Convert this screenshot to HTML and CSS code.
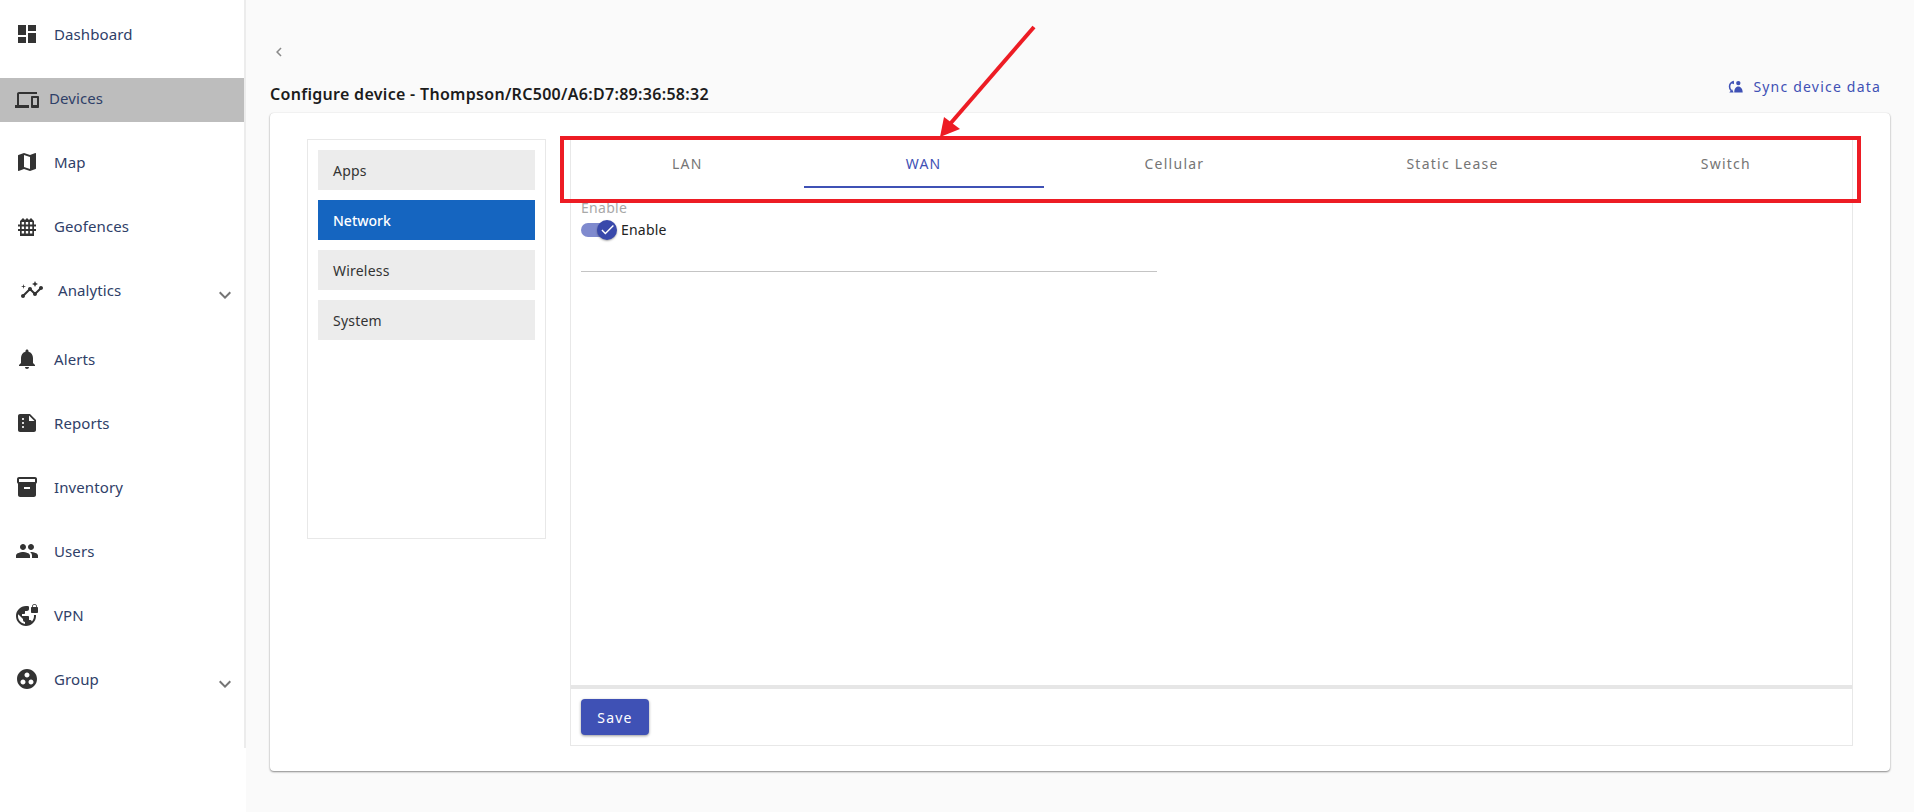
FILE: index.html
```html
<!DOCTYPE html>
<html>
<head>
    <title>Configure device</title>
    <link rel="stylesheet" href="styles.css">
</head>
<body>
    <aside class="sidebar">
        <nav class="nav">
            <a class="nav-item">
                <svg class="icon" viewBox="0 0 24 24"><path d="M3 13h8V3H3v10zm0 8h8v-6H3v6zm10 0h8V11h-8v10zm0-18v6h8V3h-8z"/></svg>
                <span>Dashboard</span>
            </a>
            <a class="nav-item active">
                <svg class="icon" viewBox="0 0 24 24"><path d="M4 6h18V4H4c-1.1 0-2 .9-2 2v11H0v3h14v-3H4V6zm19 2h-6c-.55 0-1 .45-1 1v10c0 .55.45 1 1 1h6c.55 0 1-.45 1-1V9c0-.55-.45-1-1-1zm-1 9h-4v-7h4v7z"/></svg>
                <span>Devices</span>
            </a>
            <a class="nav-item">
                <svg class="icon" viewBox="0 0 24 24"><path d="M20.5 3l-.16.03L15 5.1 9 3 3.36 4.9c-.21.07-.36.25-.36.48V20.5c0 .28.22.5.5.5l.16-.03L9 18.9l6 2.1 5.64-1.9c.21-.07.36-.25.36-.48V3.5c0-.28-.22-.5-.5-.5zM15 19l-6-2.11V5l6 2.11V19z"/></svg>
                <span>Map</span>
            </a>
            <a class="nav-item">
                <svg class="icon" viewBox="0 0 24 24"><path fill-rule="evenodd" d="M5 22V7l3-3 2 2 2-2 2 2 2-2 3 3v15zM6.7 8h2.4v2.5H6.700zM10.800 8h2.400v2.500h-2.400zM14.900 8h2.400v2.500h-2.400zM6.700 12.500h2.400V15H6.700zM10.800 12.500h2.400V15h-2.400zM14.900 12.500h2.400V15h-2.400zM6.700 17h2.400v2.500H6.700zM10.800 17h2.400v2.500h-2.400zM14.900 17h2.400v2.500h-2.400z"/><path d="M3 10.500h2v2H3zM19 10.500h2v2h-2zM3 15h2v2H3zM19 15h2v2h-2z"/></svg>
                <span>Geofences</span>
            </a>
            <a class="nav-item analytics">
                <svg class="icon" viewBox="0 0 24 24"><path d="M21 8c-1.450 0-2.260 1.440-1.930 2.510l-3.550 3.560c-.3-.09-.74-.09-1.040 0l-2.550-2.550C12.270 10.450 11.460 9 10 9c-1.450 0-2.270 1.440-1.930 2.520l-4.560 4.550C2.440 15.740 1 16.550 1 18c0 1.100.9 2 2 2 1.450 0 2.260-1.440 1.930-2.510l4.550-4.560c.3.090.74.090 1.040 0l2.550 2.550C12.730 16.550 13.540 18 15 18c1.450 0 2.270-1.440 1.930-2.520l3.560-3.550c1.070.33 2.510-.48 2.510-1.930 0-1.100-.9-2-2-2z"/><path d="M15 9l.94-2.070L18 6l-2.060-.93L15 3l-.92 2.070L12 6l2.080.93zM3.500 11L4 9l2-.5L4 8l-.5-2L3 8l-2 .5L3 9z"/></svg>
                <span>Analytics</span>
                <svg class="chevron" viewBox="0 0 24 24"><path d="M16.590 8.590L12 13.170 7.410 8.590 6 10l6 6 6-6z"/></svg>
            </a>
            <a class="nav-item">
                <svg class="icon" viewBox="0 0 24 24"><path d="M12 22c1.100 0 2-.9 2-2h-4c0 1.100.89 2 2 2zm6-6v-5c0-3.070-1.640-5.640-4.500-6.320V4c0-.83-.67-1.500-1.500-1.500s-1.500.67-1.500 1.500v.68C7.630 5.360 6 7.920 6 11v5l-2 2v1h16v-1l-2-2z"/></svg>
                <span>Alerts</span>
            </a>
            <a class="nav-item">
                <svg class="icon" viewBox="0 0 24 24"><path d="M15 3H5c-1.100 0-1.990.9-1.990 2L3 19c0 1.100.89 2 1.990 2H19c1.100 0 2-.9 2-2V9l-6-6zM8 17c-.55 0-1-.45-1-1s.45-1 1-1 1 .45 1 1-.45 1-1 1zm0-4c-.55 0-1-.45-1-1s.45-1 1-1 1 .45 1 1-.45 1-1 1zm0-4c-.55 0-1-.45-1-1s.45-1 1-1 1 .45 1 1-.45 1-1 1zm6 1V4.500l5.500 5.500H14z"/></svg>
                <span>Reports</span>
            </a>
            <a class="nav-item">
                <svg class="icon" viewBox="0 0 24 24"><path d="M20 2H4c-1 0-2 .9-2 2v3.010c0 .72.43 1.340 1 1.690V20c0 1.100 1.100 2 2 2h14c.9 0 2-.9 2-2V8.700c.57-.35 1-.97 1-1.690V4c0-1.100-1-2-2-2zm-5 12H9v-2h6v2zm5-7H4V4l16-.02V7z"/></svg>
                <span>Inventory</span>
            </a>
            <a class="nav-item">
                <svg class="icon" viewBox="0 0 24 24"><path d="M16 11c1.660 0 2.990-1.340 2.990-3S17.660 5 16 5c-1.660 0-3 1.340-3 3s1.340 3 3 3zm-8 0c1.660 0 2.990-1.340 2.990-3S9.660 5 8 5C6.340 5 5 6.340 5 8s1.340 3 3 3zm0 2c-2.330 0-7 1.170-7 3.500V19h14v-2.500c0-2.330-4.670-3.500-7-3.500zm8 0c-.29 0-.62.02-.97.05 1.160.84 1.970 1.970 1.970 3.450V19h6v-2.500c0-2.330-4.670-3.500-7-3.500z"/></svg>
                <span>Users</span>
            </a>
            <a class="nav-item">
                <svg class="icon" viewBox="0 0 24 24"><path d="M22 4v-.5C22 2.120 20.880 1 19.500 1S17 2.120 17 3.500V4c-.55 0-1 .45-1 1v4c0 .55.45 1 1 1h5c.55 0 1-.45 1-1V5c0-.55-.45-1-1-1zm-.8 0h-3.400v-.5c0-.94.76-1.700 1.700-1.700s1.700.76 1.700 1.700V4zm-2.280 8c.04.33.08.66.08 1 0 2.080-.8 3.970-2.100 5.390-.26-.81-1-1.390-1.900-1.390h-1v-3c0-.55-.45-1-1-1H7v-2h2c.55 0 1-.45 1-1V8h2c1.100 0 2-.9 2-2V3.460c-.95-.3-1.950-.46-3-.46C5.480 3 1 7.480 1 13s4.480 10 10 10 10-4.480 10-10c0-.34-.02-.67-.05-1h-2.030zM10 20.930c-3.950-.49-7-3.850-7-7.930 0-.62.08-1.210.21-1.790L8 16v1c0 1.100.9 2 2 2v1.930z"/></svg>
                <span>VPN</span>
            </a>
            <a class="nav-item">
                <svg class="icon" viewBox="0 0 24 24"><path d="M12 2C6.480 2 2 6.480 2 12s4.480 10 10 10 10-4.480 10-10S17.520 2 12 2zM8 17.500c-1.380 0-2.500-1.120-2.500-2.500s1.120-2.500 2.500-2.500 2.500 1.120 2.500 2.500-1.120 2.500-2.500 2.500zM9.500 8c0-1.380 1.120-2.500 2.500-2.500s2.500 1.120 2.500 2.500-1.120 2.500-2.500 2.500S9.500 9.380 9.500 8zm6.500 9.500c-1.380 0-2.500-1.120-2.500-2.500s1.120-2.500 2.500-2.500 2.500 1.120 2.500 2.500-1.120 2.500-2.500 2.500z"/></svg>
                <span>Group</span>
                <svg class="chevron" viewBox="0 0 24 24"><path d="M16.590 8.590L12 13.170 7.410 8.590 6 10l6 6 6-6z"/></svg>
            </a>
        </nav>
    </aside>

    <main class="main">
        <div class="back">
            <svg viewBox="0 0 24 24"><path d="M15.410 7.410L14 6l-6 6 6 6 1.410-1.410L10.830 12z"/></svg>
        </div>
        <div class="page-head">
            <h1>Configure device - Thompson/RC500/A6:D7:89:36:58:32</h1>
            <a class="sync">
                <svg viewBox="0 0 24 24"><path class="sync-arc" d="M8 4.500C4 6 2.500 9 2.500 12.500c0 2.500 1 4.500 2.500 6"/><path d="M9.500 2.500v6l-5-2zM2 21.500h7l-2.500-5zM16.500 3a3.500 3.500 0 1 1 0 7 3.500 3.500 0 0 1 0-7zM10 21.500c0-5.500 2.500-9.500 6.500-9.500s7 4 7 9.500z"/></svg>
                <span>Sync device data</span>
            </a>
        </div>

        <section class="card">
            <ul class="side-menu">
                <li>Apps</li>
                <li class="selected">Network</li>
                <li>Wireless</li>
                <li>System</li>
            </ul>

            <div class="pane">
                <div class="tabs">
                    <div class="tab">LAN</div>
                    <div class="tab current">WAN</div>
                    <div class="tab">Cellular</div>
                    <div class="tab">Static Lease</div>
                    <div class="tab">Switch</div>
                </div>
                <div class="form">
                    <div class="field">
                        <div class="field-label">Enable</div>
                        <div class="toggle-row">
                            <span class="toggle">
                                <span class="knob">
                                    <svg viewBox="0 0 24 24"><path d="M9 16.170L4.830 12l-1.420 1.410L9 19 21 7l-1.410-1.410z"/></svg>
                                </span>
                            </span>
                            <span>Enable</span>
                        </div>
                    </div>
                </div>
                <div class="pane-foot">
                    <button class="save">Save</button>
                </div>
            </div>
        </section>
    </main>

    <!-- annotation drawn over the screenshot -->
    <svg class="markup" viewBox="0 0 1914 812">
        <rect x="562" y="138" width="1297" height="63" fill="none" stroke="#ed1c24" stroke-width="4"/>
        <line x1="1034" y1="27" x2="950" y2="124" stroke="#ed1c24" stroke-width="4"/>
        <polygon points="940,137 944,117 960,129" fill="#ed1c24"/>
    </svg>
</body>
</html>
```

FILE: styles.css
```css
* {
    box-sizing: border-box;
}

html, body {
    height: 100%;
}

body {
    margin: 0;
    display: flex;
    height: 812px;
    overflow: hidden;
    font-family: "Noto Sans", "Open Sans", sans-serif;
    font-size: 14px;
    color: #222;
    background: #fafafa;
}

/* sidebar */
.sidebar {
    width: 246px;
    flex-shrink: 0;
    background: #fff;
}

.nav {
    height: 748px;
    padding-top: 2px;
    border-right: 2px solid #ececec;
}

.nav-item {
    display: flex;
    align-items: center;
    gap: 15px;
    height: 64px;
    padding-left: 15px;
    font-size: 15px;
    color: #2f4068;
    letter-spacing: 0.1px;
}

.icon {
    width: 24px;
    height: 24px;
    flex-shrink: 0;
    fill: #333;
}

.nav-item.active {
    height: 44px;
    gap: 10px;
    margin: 12px 0 8px;
    background: #bdbdbd;
}

.nav-item.active span {
    padding-bottom: 4px;
}

.nav-item.analytics {
    gap: 14px;
    padding-left: 20px;
    margin-bottom: 5px;
}

.chevron {
    width: 24px;
    height: 24px;
    margin-left: auto;
    margin-right: 7px;
    margin-top: 9px;
    fill: #757575;
}

/* main */
.main {
    flex: 1;
    padding: 0 24px;
}

.back {
    height: 68px;
    padding-top: 43px;
}

.back svg {
    display: block;
    width: 18px;
    height: 18px;
    fill: #8a8a8a;
}

.page-head {
    display: flex;
    justify-content: space-between;
    height: 45px;
}

h1 {
    margin: 15px 0 0;
    font-size: 16px;
    line-height: 22px;
    font-weight: 600;
    letter-spacing: 0.3px;
    color: #1c1c1c;
}

.sync {
    display: flex;
    align-items: center;
    gap: 10px;
    height: 20px;
    margin: 8px 9px 0 0;
    color: #3f51b5;
    letter-spacing: 1.2px;
}

.sync svg {
    width: 15px;
    height: 15px;
    fill: #3f51b5;
}

.sync-arc {
    fill: none;
    stroke: #3f51b5;
    stroke-width: 2.5;
}

.card {
    display: flex;
    align-items: flex-start;
    gap: 24px;
    height: 658px;
    padding: 26px 37px 25px 37px;
    background: #fff;
    border-radius: 4px;
    box-shadow: 0 1px 2px rgba(0,0,0,0.45), 0 0 1px rgba(0,0,0,0.12);
}

.side-menu {
    width: 239px;
    height: 400px;
    flex-shrink: 0;
    margin: 0;
    padding: 10px;
    list-style: none;
    border: 1px solid #e8e8e8;
}

.side-menu li {
    height: 40px;
    margin-bottom: 10px;
    padding-left: 15px;
    line-height: 42px;
    letter-spacing: 0.2px;
    background: #ececec;
    color: #333;
}

.side-menu li.selected {
    background: #1565c0;
    color: #fff;
    font-weight: 500;
    letter-spacing: 0;
}

.pane {
    flex: 1;
    align-self: stretch;
    display: flex;
    flex-direction: column;
    border: 1px solid #e8e8e8;
}

.tabs {
    display: flex;
    height: 48px;
}

.tab {
    flex: 1 1 auto;
    text-align: center;
    line-height: 48px;
    letter-spacing: 1.25px;
    color: #757575;
}

.tab.current {
    padding: 0 1px;
    color: #3f51b5;
    border-bottom: 2px solid #3f51b5;
}

.form {
    flex: 1;
    padding: 10px;
}

.field {
    width: 576px;
    height: 74px;
    border-bottom: 1px solid #c4c4c4;
}

.field-label {
    line-height: 20px;
    letter-spacing: 0.3px;
    color: #a8a8a8;
}

.toggle-row {
    display: flex;
    align-items: center;
    gap: 6px;
    height: 23px;
    letter-spacing: 0.2px;
}

.toggle {
    position: relative;
    width: 34px;
    height: 14px;
    border-radius: 7px;
    background: #7f8ace;
}

.knob {
    position: absolute;
    top: -3px;
    right: -2px;
    display: flex;
    align-items: center;
    justify-content: center;
    width: 20px;
    height: 20px;
    border-radius: 50%;
    background: #3949ab;
    box-shadow: 0 1px 2px rgba(0,0,0,0.35);
}

.knob svg {
    width: 17px;
    height: 17px;
    fill: #fff;
}

.pane-foot {
    height: 60px;
    padding: 10px;
    border-top: 4px solid #e6e6e6;
}

.save {
    display: block;
    width: 68px;
    height: 36px;
    padding: 0;
    border: none;
    border-radius: 4px;
    background: #3f51b5;
    color: #fff;
    font-family: inherit;
    font-size: 14px;
    letter-spacing: 1.25px;
    box-shadow: 0 1px 3px rgba(0,0,0,0.4);
}

.markup {
    position: absolute;
    top: 0;
    left: 0;
    width: 1914px;
    height: 812px;
    pointer-events: none;
}
```
